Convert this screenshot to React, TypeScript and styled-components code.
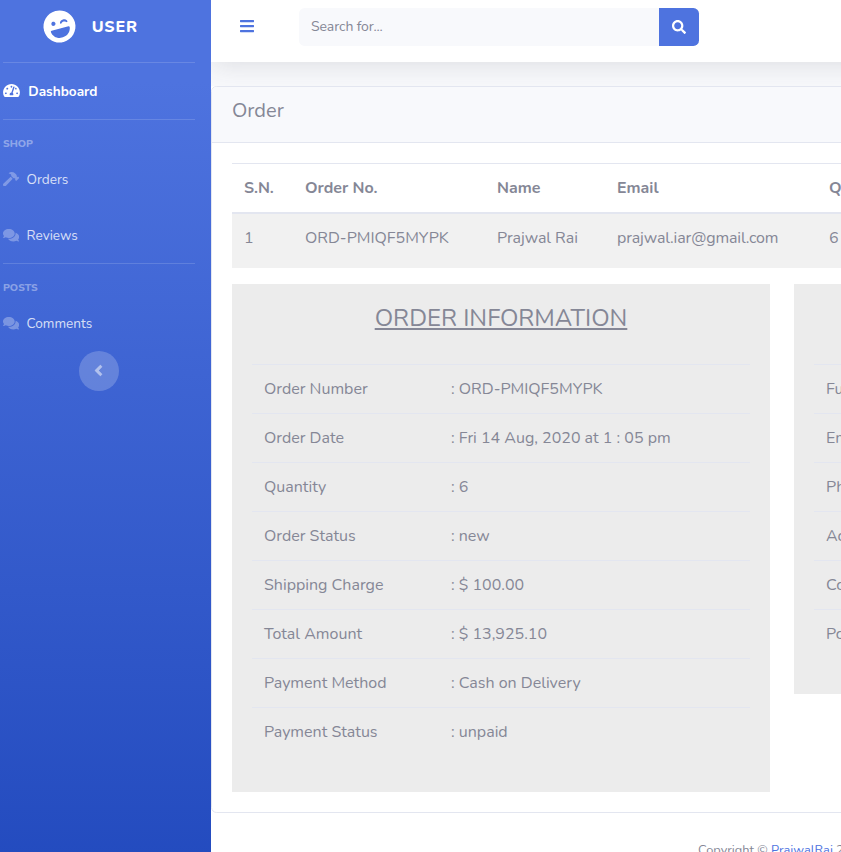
import React from 'react';
import styled, { createGlobalStyle, css } from 'styled-components';
import {
  FaAngleLeft,
  FaBars,
  FaComments,
  FaHammer,
  FaLaughWink,
  FaSearch,
  FaTachometerAlt,
} from 'react-icons/fa';

const GlobalStyle = createGlobalStyle`
  *, *::before, *::after { box-sizing: border-box; }
  body {
    margin: 0;
    background: #fff;
    color: #858796;
    font-family: Nunito, Lato, sans-serif;
    font-size: 16px;
    line-height: 24px;
  }
`;

const Page = styled.div`
  display: flex;
  height: 852px;
  overflow: hidden;
`;

/* Sidebar */

const Sidebar = styled.nav`
  flex: 0 0 211px;
  padding: 0 16px 0 3px;
  display: flex;
  flex-direction: column;
  background: linear-gradient(180deg, #4e73df 81px, #224abe 882px);
`;

const Brand = styled.div`
  height: 62px;
  padding: 0 17px 10px 0;
  display: flex;
  align-items: center;
  justify-content: center;
  gap: 15.5px;
  color: #fff;
  font-weight: 800;
  letter-spacing: 0.8px;

  svg {
    width: 33px;
    height: 33px;
    transform: rotate(-15deg);
  }

  span {
    padding-top: 1px;
  }
`;

const Divider = styled.hr`
  width: 100%;
  height: 1px;
  margin: 0;
  border: 0;
  background: rgba(255, 255, 255, 0.15);
`;

const NavGroup = styled.div`
  display: flex;
  flex-direction: column;
  margin-bottom: -1px;
`;

const NavHeading = styled.div`
  height: 32px;
  padding-top: 16px;
  color: rgba(255, 255, 255, 0.4);
  font-size: 10.4px;
  font-weight: 800;
  line-height: 16px;
`;

const NavLink = styled.a<{ $active?: boolean }>`
  height: 56px;
  display: flex;
  align-items: center;
  gap: 7.4px;
  color: rgba(255, 255, 255, 0.8);
  font-size: 13.6px;
  line-height: 20px;

  svg {
    width: 16.2px;
    height: 14.4px;
    margin-bottom: 2px;
    color: rgba(255, 255, 255, 0.3);
  }

  ${(p) =>
    p.$active &&
    css`
      gap: 8.3px;
      padding-top: 1px;
      color: #fff;
      font-weight: 700;

      svg {
        width: 17px;
        height: 15px;
        color: #fff;
      }
    `}
`;

const ToggleButton = styled.button`
  align-self: center;
  width: 40px;
  height: 40px;
  padding: 0 1px 1px 0;
  display: flex;
  align-items: center;
  justify-content: center;
  border: 0;
  border-radius: 50%;
  background: rgba(255, 255, 255, 0.2);
  color: rgba(255, 255, 255, 0.5);

  svg {
    width: 17px;
    height: 17px;
    stroke: currentColor;
    stroke-width: 12px;
  }
`;

/* Content */

const Content = styled.div`
  flex: 1;
  min-width: 0;
  overflow: hidden;
`;

const Canvas = styled.div`
  width: 1142px;
`;

const TopArea = styled.div`
  height: 86px;
  background: #f8f9fc;
`;

const Topbar = styled.header`
  height: 62px;
  padding: 8px 0 0 29px;
  display: flex;
  align-items: flex-start;
  background: #fff;
  box-shadow: 0 2.4px 28px 0 rgba(58, 59, 69, 0.15);
`;

const MenuButton = styled.button`
  width: 59px;
  height: 36px;
  padding: 0;
  display: flex;
  align-items: center;
  border: 0;
  background: none;
  color: #4e73df;

  svg {
    width: 14px;
    height: 16px;
  }
`;

const SearchBox = styled.div`
  width: 360px;
  height: 38px;
  padding: 0 12px;
  display: flex;
  align-items: center;
  border-radius: 5.6px 0 0 5.6px;
  background: #f8f9fc;
  font-size: 14px;
  letter-spacing: -0.1px;
`;

const SearchButton = styled.button`
  width: 40px;
  height: 38px;
  padding: 0;
  display: flex;
  align-items: center;
  justify-content: center;
  border: 0;
  border-radius: 0 5.6px 5.6px 0;
  background: #4e73df;
  color: #fff;

  svg {
    width: 14px;
    height: 14px;
  }
`;

const Card = styled.section`
  position: relative;
  border: 1px solid #e3e6f0;
  border-radius: 5.6px;
  background: #fff;
`;

const CardHeader = styled.h5`
  height: 56px;
  margin: 0;
  padding: 12px 20px 0;
  border-bottom: 1px solid #e3e6f0;
  border-radius: 4.6px 4.6px 0 0;
  background: #f8f9fc;
  font-size: 20px;
  font-weight: 400;
`;

const CardBody = styled.div`
  padding: 20px;
`;

const OrderTable = styled.div`
  margin-bottom: 16px;
`;

const OrderRow = styled.div<{ $head?: boolean }>`
  display: grid;
  grid-template-columns: 61px 192px 120px 212px 1fr;
  height: 54px;
  background: #f1f1f1;

  > * {
    padding: 12px;
  }

  ${(p) =>
    p.$head &&
    css`
      height: 51px;
      border-top: 1px solid #e3e6f0;
      border-bottom: 2px solid #e3e6f0;
      background: none;
      font-weight: 700;
    `}
`;

const OrderCell = styled.span<{ $tracking?: number }>`
  letter-spacing: ${(p) => p.$tracking ?? 0}px;
`;

const Panels = styled.div`
  display: grid;
  grid-template-columns: 538px 538px;
  gap: 24px;
  align-items: start;
`;

const Panel = styled.div`
  padding: 20px 20px 36px;
  background: #ececec;
`;

const PanelTitle = styled.h4`
  height: 60px;
  margin: 0;
  font-size: 24px;
  font-weight: 400;
  line-height: 28px;
  text-align: center;
  text-decoration: underline;
  text-decoration-thickness: 2px;
  text-underline-offset: 2px;
`;

const InfoRow = styled.div`
  display: grid;
  grid-template-columns: 187px 1fr;
  height: 49px;
  border-top: 1px solid #e3e6f0;

  > * {
    padding: 12px;
  }
`;

const Footer = styled.footer`
  padding: 31px 0 0 487px;
  font-size: 12.8px;
  line-height: 13px;

  a {
    color: #4e73df;
  }
`;

const columns = ['S.N.', 'Order No.', 'Name', 'Email', 'Quantity'];

const order = [
  { text: '1' },
  { text: 'ORD-PMIQF5MYPK' },
  { text: 'Prajwal Rai', tracking: -0.05 },
  { text: 'prajwal.iar@gmail.com', tracking: -0.12 },
  { text: '6' },
];

const orderInfo = [
  ['Order Number', 'ORD-PMIQF5MYPK'],
  ['Order Date', 'Fri 14 Aug, 2020 at 1 : 05 pm'],
  ['Quantity', '6'],
  ['Order Status', 'new'],
  ['Shipping Charge', '$ 100.00'],
  ['Total Amount', '$ 13,925.10'],
  ['Payment Method', 'Cash on Delivery'],
  ['Payment Status', 'unpaid'],
];

const shippingInfo = ['Full Name', 'Email', 'Phone No.', 'Address', 'Country', 'Post Code'];

export default function App() {
  return (
    <Page>
      <GlobalStyle />
      <Sidebar>
        <Brand>
          <FaLaughWink />
          <span>USER</span>
        </Brand>
        <Divider />
        <NavLink $active>
          <FaTachometerAlt />
          <span>Dashboard</span>
        </NavLink>
        <Divider />
        <NavGroup>
          <NavHeading>SHOP</NavHeading>
          <NavLink>
            <FaHammer />
            <span>Orders</span>
          </NavLink>
          <NavLink>
            <FaComments />
            <span>Reviews</span>
          </NavLink>
        </NavGroup>
        <Divider />
        <NavGroup>
          <NavHeading>POSTS</NavHeading>
          <NavLink>
            <FaComments />
            <span>Comments</span>
          </NavLink>
        </NavGroup>
        <ToggleButton aria-label="Collapse sidebar">
          <FaAngleLeft />
        </ToggleButton>
      </Sidebar>

      <Content>
        <Canvas>
          <TopArea>
            <Topbar>
              <MenuButton aria-label="Menu"><FaBars /></MenuButton>
              <SearchBox>Search for...</SearchBox>
              <SearchButton aria-label="Search"><FaSearch /></SearchButton>
            </Topbar>
          </TopArea>

          <Card>
            <CardHeader>Order</CardHeader>
            <CardBody>
              <OrderTable>
                <OrderRow $head>
                  {columns.map((text) => <OrderCell key={text}>{text}</OrderCell>)}
                </OrderRow>
                <OrderRow>
                  {order.map(({ text, tracking }) => (
                    <OrderCell key={text} $tracking={tracking}>{text}</OrderCell>
                  ))}
                </OrderRow>
              </OrderTable>

              <Panels>
                <Panel>
                  <PanelTitle>ORDER INFORMATION</PanelTitle>
                  {orderInfo.map(([label, value]) => (
                    <InfoRow key={label}>
                      <span>{label}</span>
                      <span>: {value}</span>
                    </InfoRow>
                  ))}
                </Panel>
                <Panel>
                  <PanelTitle>SHIPPING INFORMATION</PanelTitle>
                  {shippingInfo.map((label) => (
                    <InfoRow key={label}>
                      <span>{label}</span>
                    </InfoRow>
                  ))}
                </Panel>
              </Panels>
            </CardBody>
          </Card>

          <Footer>
            Copyright © <a>PrajwalRai</a> 2020
          </Footer>
        </Canvas>
      </Content>
    </Page>
  );
}
